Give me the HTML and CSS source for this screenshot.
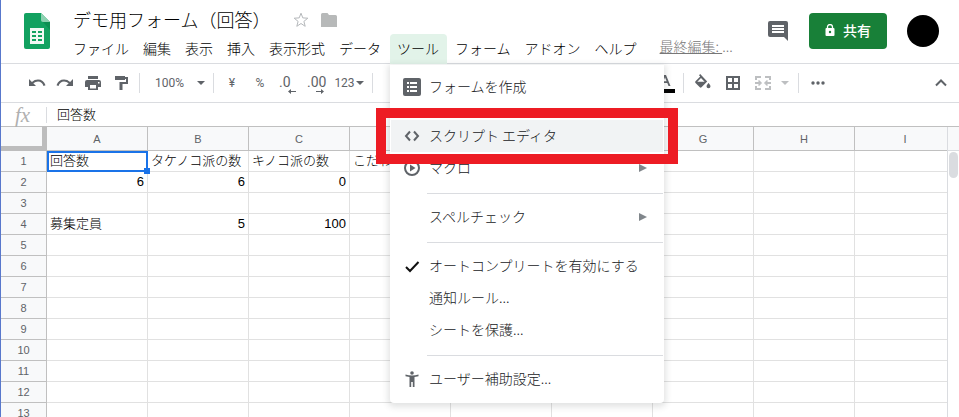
FILE: index.html
```
<!DOCTYPE html>
<html lang="ja">
<head>
    <meta charset="UTF-8">
    <meta name="viewport" content="width=device-width, initial-scale=1.0">
    <title>デモ用フォーム（回答）</title>
    <link rel="stylesheet" href="styles.css">
</head>
<body>

<header class="header">
    <svg class="logo" width="26" height="36" viewBox="0 0 26 36">
        <path d="M2 0h15l9 9v25a2 2 0 0 1-2 2H2a2 2 0 0 1-2-2V2a2 2 0 0 1 2-2z" fill="#12a160"/>
        <path d="M17 0l9 9h-7a2 2 0 0 1-2-2z" fill="#8ed1b1"/>
        <path d="M19 9h7v8z" fill="#0c8f52"/>
        <path d="M6 15h14v16H6z" fill="#f1f8f4"/>
        <path d="M8 18h4v2H8zm6 0h4v2h-4zM8 22h4v2H8zm6 0h4v2h-4zM8 26h4v2H8zm6 0h4v2h-4z" fill="#12a160"/>
    </svg>

    <div class="doc">
        <div class="title-row">
            <h1>デモ用フォーム（回答）</h1>
            <button class="icon-btn" aria-label="スター">
                <svg width="16" height="16" viewBox="0 0 16 16" fill="none" stroke="#b5b8bb"><path d="M8 1.200l1.800 4.700 5 .3-3.900 3.200 1.300 4.900L8 11.500l-4.200 2.800 1.300-4.900L1.200 6.200l5-.3z"/></svg>
            </button>
            <button class="icon-btn" aria-label="フォルダ">
                <svg width="16" height="14" viewBox="0 0 16 14" fill="#b7b9b9"><path d="M1.500 0H6.500L8 2h6.500A1.500 1.500 0 0 1 16 3.500V14H0V1.500A1.500 1.500 0 0 1 1.500 0z"/></svg>
            </button>
        </div>

        <nav class="menubar">
            <button class="menu-btn">ファイル</button>
            <button class="menu-btn">編集</button>
            <button class="menu-btn">表示</button>
            <button class="menu-btn">挿入</button>
            <button class="menu-btn">表示形式</button>
            <button class="menu-btn">データ</button>
            <div class="menu-open">
                <button class="menu-btn active">ツール</button>
                <!-- Tools menu -->
                <div class="dropdown">
                    <button class="item">
                        <svg width="18" height="18" viewBox="0 0 18 18"><rect width="18" height="18" rx="2" fill="#5f6368"/><path d="M4 4h2v2H4zm3 0h7v2H7zM4 8h2v2H4zm3 0h7v2H7zM4 12h2v2H4zm3 0h7v2H7z" fill="#fff"/></svg>
                        <span>フォームを作成</span>
                    </button>
                    <hr>
                    <button class="item hover">
                        <svg width="18" height="18" viewBox="0 0 18 18" fill="none" stroke="#5f6368" stroke-width="2"><path d="M7 4.500L3 9l4 4.500M11 4.500L15 9l-4 4.500"/></svg>
                        <span>スクリプト エディタ</span>
                    </button>
                    <button class="item">
                        <svg width="18" height="18" viewBox="0 0 18 18"><circle cx="9" cy="9" r="7" fill="none" stroke="#5f6368" stroke-width="2"/><path d="M7 5.500L12.500 9 7 12.500z" fill="#5f6368"/></svg>
                        <span>マクロ</span>
                        <i class="arrow"></i>
                    </button>
                    <hr>
                    <button class="item no-icon">
                        <span>スペルチェック</span>
                        <i class="arrow"></i>
                    </button>
                    <hr>
                    <button class="item">
                        <svg width="18" height="18" viewBox="0 0 18 18" fill="none" stroke="#111" stroke-width="2"><path d="M3 10l4 4 8.500-9"/></svg>
                        <span>オートコンプリートを有効にする</span>
                    </button>
                    <button class="item no-icon"><span>通知ルール...</span></button>
                    <button class="item no-icon"><span>シートを保護...</span></button>
                    <hr>
                    <button class="item">
                        <svg width="18" height="18" viewBox="0 0 18 18" fill="#5f6368"><circle cx="9" cy="3" r="1.800"/><path d="M2.500 4.500Q9 6.500 15.500 4.500V6.200L11.500 7V17H9.800V12H8.200V17H6.500V7L2.500 6.200z"/></svg>
                        <span>ユーザー補助設定...</span>
                    </button>
                    <div class="highlight"></div>
                </div>
            </div>
            <button class="menu-btn">フォーム</button>
            <button class="menu-btn">アドオン</button>
            <button class="menu-btn">ヘルプ</button>
            <a class="last-edit" href="#"><span>最終編集: </span>...</a>
        </nav>
    </div>

    <div class="actions">
        <button class="icon-btn" aria-label="コメント">
            <svg width="20" height="20" viewBox="0 0 20 20"><path d="M2 0h16a2 2 0 0 1 2 2v18l-4-4H2a2 2 0 0 1-2-2V2a2 2 0 0 1 2-2z" fill="#5f6368"/><path d="M4 4h12v2H4zm0 3h12v2H4zm0 3h12v2H4z" fill="#fff"/></svg>
        </button>
        <button class="share">
            <svg width="10" height="12" viewBox="0 0 10 12"><path d="M2.500 5V3a2.500 2.500 0 0 1 5 0v2" fill="none" stroke="#fff" stroke-width="1.300"/><rect x="0.500" y="4" width="9" height="8" rx="1" fill="#fff"/><circle cx="5" cy="8" r="1.200" fill="#188038"/></svg>
            共有
        </button>
        <button class="avatar" aria-label="アカウント"></button>
    </div>
</header>

<div class="toolbar">
    <button class="tool" aria-label="元に戻す">
        <svg width="18" height="18" viewBox="0 0 18 18"><path d="M1 5v7h7L5.300 9.300Q7.500 7.500 10 7.500q4 0 5.500 4.500L17.500 11.300Q15.500 5.500 10 5.500 6.500 5.500 3.900 7.900z" fill="#5f6368"/></svg>
    </button>
    <button class="tool" aria-label="やり直し">
        <svg width="18" height="18" viewBox="0 0 18 18"><path d="M17 5v7h-7l2.700-2.700Q10.500 7.500 8 7.500 4 7.500 2.500 12L.5 11.300Q2.500 5.500 8 5.500q3.500 0 6.100 2.400z" fill="#5f6368"/></svg>
    </button>
    <button class="tool" aria-label="印刷">
        <svg width="18" height="18" viewBox="0 0 18 18" fill="#5f6368"><path d="M4 2h10v3H4zM3 6h12a2 2 0 0 1 2 2v5h-3v3H4v-3H1V8a2 2 0 0 1 2-2zm3 5v3.500h6V11zm8-3v1.500h1.500V8z" fill-rule="evenodd"/></svg>
    </button>
    <button class="tool" aria-label="書式を貼り付け">
        <svg width="18" height="18" viewBox="0 0 18 18"><path d="M3 2h10v1h3v7h-5.500v6h-3V8H14V5h-1v1H3z" fill="#5f6368"/></svg>
    </button>
    <span class="sep"></span>
    <div class="zoom">
        <select aria-label="ズーム"><option>100%</option></select>
        <i class="caret"></i>
    </div>
    <span class="sep"></span>
    <button class="tool money">¥</button>
    <button class="tool money">%</button>
    <button class="tool decimal">
        .0
        <svg width="8" height="5" viewBox="0 0 8 5" fill="#5f6368"><path d="M3 0v5L0 2.500zM3 2h5v1H3z"/></svg>
    </button>
    <button class="tool decimal">
        .00
        <svg width="8" height="5" viewBox="0 0 8 5" fill="#5f6368"><path d="M5 0v5l3-2.500zM0 2h5v1H0z"/></svg>
    </button>
    <button class="tool format">123<i class="caret"></i></button>
    <span class="sep"></span>
    <div class="text-tools">
        <button class="tool" aria-label="テキストの色">
            <svg width="20" height="20" viewBox="0 0 20 20"><path d="M4.500 13L9 2h2l4.500 11h-2l-1.200-3H7.700l-1.200 3zm3.900-4.700h3.200L10 4.200z" fill="#5f6368"/><path d="M0 16h20v4H0z"/></svg>
        </button>
    </div>
    <span class="sep"></span>
    <button class="tool wide" aria-label="塗りつぶしの色">
        <svg width="18" height="18" viewBox="0 0 18 18" fill="#5f6368"><path d="M5 1.200L6.200 0l7 7.500-5.700 5.700a1.200 1.200 0 0 1-1.700 0L1.500 9a1.200 1.200 0 0 1 0-1.700l4.700-4.700zM7 4.100L3.300 7.800h7.300zM14.500 9s2 2.200 2 3.300a2 2 0 0 1-4 0c0-1.100 2-3.300 2-3.300z" fill-rule="evenodd"/></svg>
    </button>
    <button class="tool wide" aria-label="枠線">
        <svg width="18" height="18" viewBox="0 0 18 18" fill="none" stroke="#5f6368" stroke-width="2"><path d="M3 3h12v12H3zM9 3v12M3 9h12"/></svg>
    </button>
    <button class="tool wide" aria-label="セルを結合">
        <svg width="18" height="18" viewBox="0 0 18 18" fill="none" stroke="#bdbfc1" stroke-width="2"><path d="M2 6V3h5M11 3h5v3M2 12v3h5M11 15h5v-3M1 9h5M12 9h5"/><path d="M4.500 6.500L7 9l-2.500 2.500M13.500 6.500L11 9l2.500 2.500" stroke-width="1.500"/></svg>
    </button>
    <i class="caret faded"></i>
    <span class="sep"></span>
    <button class="tool more" aria-label="その他">
        <svg width="18" height="18" viewBox="0 0 18 18" fill="#5f6368"><circle cx="4" cy="9" r="1.700"/><circle cx="9" cy="9" r="1.700"/><circle cx="14" cy="9" r="1.700"/></svg>
    </button>
    <button class="tool collapse" aria-label="メニューを隠す">
        <svg width="18" height="18" viewBox="0 0 18 18" fill="none" stroke="#5f6368" stroke-width="2"><path d="M4 11.500l5-5 5 5"/></svg>
    </button>
</div>

<div class="formula">
    <label class="fx" for="formula">fx</label>
    <input id="formula" type="text" value="回答数">
</div>

<main class="sheet">
    <div class="grid">
        <table>
            <thead>
                <tr><th class="corner"></th><th>A</th><th>B</th><th>C</th><th>D</th><th>E</th><th>F</th><th>G</th><th>H</th><th>I</th></tr>
            </thead>
            <tbody id="rows"></tbody>
        </table>
    </div>
    <div class="scroll">
        <div class="scroll-top"></div>
        <div class="thumb"></div>
    </div>
</main>

<script>
    // Cell values by row number
    const data = {
        1: ["回答数", "タケノコ派の数", "キノコ派の数", "こだわり"],
        2: [6, 6, 0],
        4: ["募集定員", 5, 100],
    };
    const rows = document.getElementById('rows');

    for (let r = 1; r <= 13; r++) {
        const row = document.createElement('tr');
        let html = `<th>${r}</th>`;
        for (let c = 0; c < 9; c++) {
            const value = (data[r] || [])[c] ?? '';
            let cls = typeof value === 'number' ? 'num' : '';
            if (r === 1 && c === 0) cls = 'selected';
            html += `<td class="${cls}">${value}</td>`;
        }
        row.innerHTML = html;
        rows.appendChild(row);
    }
</script>

</body>
</html>
```
FILE: styles.css
```
* {
    box-sizing: border-box;
}
body {
    margin: 0;
    height: 100vh;
    display: flex;
    flex-direction: column;
    overflow: hidden;
    border-left: 1px solid #5878cc;
    background: #fff;
    color: #000;
    font-family: "Noto Sans CJK JP", sans-serif;
    font-weight: 300;
}
button, select, input {
    border: none;
    padding: 0;
    background: none;
    font: inherit;
    color: inherit;
}
button {
    cursor: pointer;
}
svg {
    display: block;
    flex: none;
}

/* Header */
.header {
    display: flex;
    flex: none;
    height: 64px;
    padding: 0 20px 0 23px;
    border-bottom: 1px solid #dadce0;
}
.logo {
    margin-top: 13px;
}
.doc {
    margin-left: 16px;
    padding-top: 6px;
}
.title-row {
    display: flex;
    align-items: center;
    height: 28px;
    padding-left: 7px;
}
h1 {
    margin: 0 23px 0 0;
    padding-bottom: 2px;
    font-size: 18px;
    font-weight: 300;
    line-height: 26px;
}
.title-row .icon-btn {
    margin-right: 12px;
}
.menubar {
    display: flex;
    height: 30px;
    font-size: 14px;
    white-space: nowrap;
}
.menu-btn {
    height: 30px;
    padding: 0 7px 2px;
    line-height: 28px;
}
.menu-btn.active {
    padding-right: 8px;
    background: #e2f3e9;
    border-radius: 4px 4px 0 0;
}
.menu-open {
    position: relative;
    margin: 0 1px 0 2px;
}
.last-edit {
    margin-left: 16px;
    color: #777;
    line-height: 24px;
    text-decoration: none;
}
.last-edit span {
    text-decoration: underline;
}
.actions {
    display: flex;
    align-items: center;
    height: 36px;
    margin: 13px 0 0 auto;
}
.share {
    display: flex;
    align-items: center;
    justify-content: center;
    gap: 8px;
    width: 78px;
    height: 36px;
    margin: 0 20px 0 21px;
    padding-bottom: 2px;
    border-radius: 4px;
    background: #188038;
    color: #fff;
    font-size: 14px;
    font-weight: 500;
}
.avatar {
    width: 32px;
    height: 32px;
    border-radius: 50%;
    background: #000;
}

/* Tools menu */
.dropdown {
    position: absolute;
    top: 31px;
    left: 0;
    z-index: 10;
    width: 274px;
    padding: 6px 1px 8px;
    border-radius: 0 0 4px 4px;
    background: #fff;
    box-shadow: 0 2px 6px 2px rgba(60, 64, 67, 0.15);
}
.item {
    display: flex;
    align-items: center;
    width: 100%;
    height: 32px;
    padding: 0 16px 0 12px;
    color: #202124;
    text-align: left;
}
.item span {
    margin-left: 8px;
    padding-bottom: 2px;
}
.item.no-icon {
    padding-left: 30px;
}
.item.hover {
    background: #f1f3f4;
}
.dropdown hr {
    height: 1px;
    margin: 9px 0 7px 36px;
    border: none;
    background: #dadce0;
}
.arrow {
    margin-left: auto;
    border-left: 8px solid #80868b;
    border-top: 4px solid transparent;
    border-bottom: 4px solid transparent;
}
.highlight {
    position: absolute;
    top: 43px;
    left: -14px;
    width: 302px;
    height: 56px;
    border: 10px solid #ed1c24;
    pointer-events: none;
}

/* Toolbar */
.toolbar {
    display: flex;
    flex: none;
    align-items: center;
    height: 39px;
    padding: 0 4px 0 22px;
    border-bottom: 1px solid #dadce0;
    color: #5f6368;
    font-family: Roboto, sans-serif;
    font-size: 12px;
    font-weight: 400;
}
.tool {
    display: flex;
    flex: none;
    align-items: center;
    justify-content: center;
    width: 28px;
    height: 28px;
}
.tool.wide {
    width: 30px;
}
.sep {
    flex: none;
    width: 1px;
    height: 20px;
    margin: 0 4px;
    background: #dadce0;
}
.zoom {
    display: flex;
    align-items: center;
    width: 65px;
    padding-left: 11px;
}
.zoom select {
    width: 42px;
    appearance: none;
}
.caret {
    flex: none;
    border-top: 4px solid #5f6368;
    border-left: 4px solid transparent;
    border-right: 4px solid transparent;
}
.caret.faded {
    border-top-color: #bdbfc1;
    margin: 0 5px 0 3px;
}
.tool.decimal {
    flex-direction: column;
    align-items: flex-start;
    padding: 4px 0 0 5px;
    font-size: 14px;
    line-height: 13px;
}
.decimal svg {
    margin-left: 9px;
}
.tool.format {
    width: 38px;
    gap: 1px;
}
.text-tools {
    display: flex;
    justify-content: flex-end;
    width: 302px;
}
.tool.more {
    margin-left: 1px;
}
.tool.collapse {
    margin-left: auto;
}

/* Formula bar */
.formula {
    display: flex;
    flex: none;
    align-items: center;
    height: 24px;
    border-bottom: 1px solid #c0c0c0;
}
.fx {
    width: 46px;
    padding-left: 14px;
    border-right: 1px solid #dadce0;
    color: #b0b0b0;
    font-family: "Liberation Serif", serif;
    font-size: 21px;
    font-style: italic;
    line-height: 16px;
}
.formula input {
    flex: 1;
    height: 22px;
    padding: 0 0 2px 10px;
    font-size: 13px;
}

/* Sheet */
.sheet {
    display: flex;
    flex: 1;
    min-height: 0;
}
.grid {
    flex: 1;
    min-width: 0;
    overflow: hidden;
}
table {
    width: 955px;
    table-layout: fixed;
    border-collapse: separate;
    border-spacing: 0;
    font-family: "Liberation Sans", "Noto Sans CJK JP", sans-serif;
    font-size: 13px;
}
th, td {
    height: 21px;
    padding: 0;
    border-right: 1px solid #e1e1e1;
    border-bottom: 1px solid #e1e1e1;
    line-height: 20px;
    white-space: nowrap;
}
th {
    border-color: #c0c0c0;
    background: #f8f9fa;
    color: #5f6368;
    font-size: 11px;
    font-weight: 400;
}
thead th {
    height: 24px;
}
th.corner {
    width: 46px;
    border-right: 5px solid #bdbdbd;
    border-bottom: 5px solid #bdbdbd;
}
td {
    padding: 0 3px;
}
td.num {
    text-align: right;
}
td.selected {
    position: relative;
    outline: 2px solid #1a73e8;
    outline-offset: -2px;
}
td.selected::after {
    content: "";
    position: absolute;
    right: -3px;
    bottom: -3px;
    width: 6px;
    height: 6px;
    background: #1a73e8;
}
.scroll {
    flex: none;
    width: 12px;
    border-left: 1px solid #dadce0;
}
.scroll-top {
    height: 24px;
    border-bottom: 1px solid #dadce0;
    background: #f8f9fa;
}
.thumb {
    width: 9px;
    height: 26px;
    margin: 1px;
    border-radius: 5px;
    background: #dadce0;
}
```
